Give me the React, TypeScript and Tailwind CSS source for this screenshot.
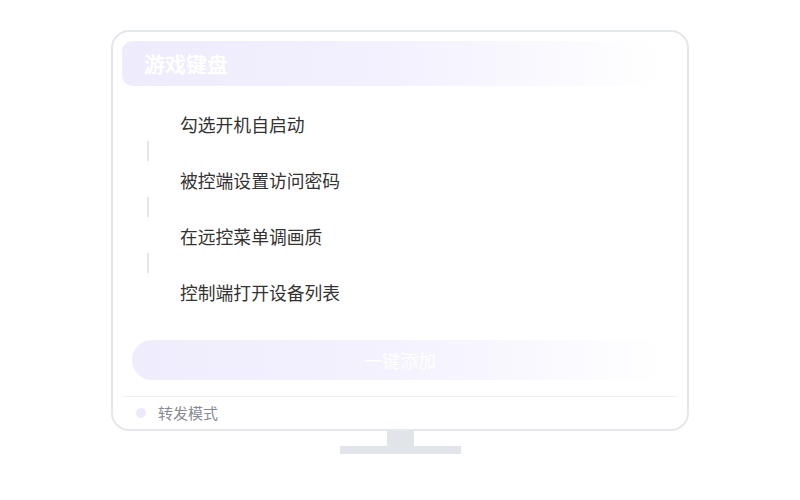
const steps = ['勾选开机自启动', '被控端设置访问密码', '在远控菜单调画质', '控制端打开设备列表'];

export default function App() {
  return (
    <div
      className="w-[800px] h-[500px] bg-white overflow-hidden"
      style={{ fontFamily: '"Noto Sans CJK SC", "Noto Sans", sans-serif' }}
    >
      <div className="ml-[111px] pt-[30px] w-[578px] flex flex-col items-center">
        {/* screen */}
        <div className="w-full h-[401px] border-2 border-[#e4e7ec] rounded-[18px] bg-white flex flex-col">
          <div className="ml-[9px] mt-[9px] w-[540px] h-[45px] rounded-[10px] bg-linear-to-r from-[#eeebfd] via-[#f3f1fe] to-[#f6f5fe]/0 flex items-center pl-[22px]">
            <span className="text-white text-[21px] font-semibold leading-none">游戏键盘</span>
          </div>

          <div className="mt-[24px] flex flex-col">
            {steps.map((s, i) => (
              <div key={s} className="flex flex-col">
                <div className="ml-[67px] h-[28px] leading-[28px] text-[17.8px] text-[#333333]">{s}</div>
                {i < steps.length - 1 && (
                  <div className="ml-[34px] mt-[3px] mb-[5px] w-[2px] h-[20px] bg-[#e3e5ea]" />
                )}
              </div>
            ))}
          </div>

          <button className="ml-[19px] mt-[34px] w-[536px] h-[40px] rounded-full bg-linear-to-r from-[#efecfd] via-[#f4f2fe] to-[#f6f5fe]/0 text-white text-[18px] flex items-center justify-center">
            一键添加
          </button>

          <div className="ml-[10px] mt-[16px] w-[554px] h-px bg-[#eceef2]" />

          <div className="flex-1 flex items-center">
            <span className="ml-[23px] w-[10px] h-[10px] rounded-full bg-[#ece9fc]" />
            <span className="ml-[12px] text-[15px] text-[#8a8a94]">转发模式</span>
          </div>
        </div>

        {/* stand */}
        <div className="w-[27px] h-[15px] bg-[#e1e4e9]" />
        <div className="w-[121px] h-[8px] bg-[#e1e4e9]" />
      </div>
    </div>
  );
}
